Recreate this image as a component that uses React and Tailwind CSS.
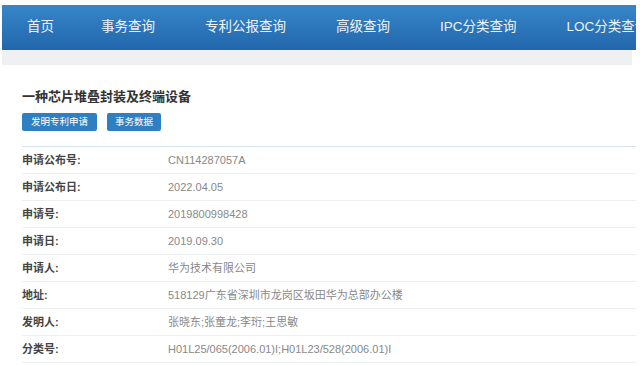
export default function App() {
  const nav = ["首页", "事务查询", "专利公报查询", "高级查询", "IPC分类查询", "LOC分类查询"];
  const rows = [
    ["申请公布号:", "CN114287057A"],
    ["申请公布日:", "2022.04.05"],
    ["申请号:", "2019800998428"],
    ["申请日:", "2019.09.30"],
    ["申请人:", "华为技术有限公司"],
    ["地址:", "518129广东省深圳市龙岗区坂田华为总部办公楼"],
    ["发明人:", "张晓东;张童龙;李珩;王思敏"],
    ["分类号:", "H01L25/065(2006.01)I;H01L23/528(2006.01)I"],
  ];
  return (
    <div
      className="w-[640px] h-[366px] overflow-hidden bg-white pt-[5px] pl-[2px] pr-[4px]"
      style={{ fontFamily: '"Liberation Sans", "Noto Sans CJK SC", sans-serif' }}
    >
      <div className="h-[45px] flex items-center overflow-hidden whitespace-nowrap bg-gradient-to-b from-[#3786c8] to-[#2266ac]">
        {nav.map((n, i) => (
          <div
            key={n}
            className={
              i === 0
                ? "pl-[25px] pr-[22px] text-[13.5px] text-[#eef3f9] shrink-0"
                : "px-[25px] text-[13.5px] text-[#eef3f9] shrink-0"
            }
          >
            {n}
          </div>
        ))}
      </div>
      <div className="h-[15px] bg-[#eef0f2] mr-[4px]" />
      <div className="pl-[20px]">
        <div className="mt-[23px] text-[13px] leading-[18px] font-bold text-[#333]">
          一种芯片堆叠封装及终端设备
        </div>
        <div className="mt-[7px] flex gap-[10px]">
          <div className="h-[18px] px-[9px] flex items-center rounded-[2px] bg-[#2f80c2] text-white text-[9.5px]">
            发明专利申请
          </div>
          <div className="h-[18px] px-[8px] flex items-center rounded-[2px] bg-[#2f80c2] text-white text-[9.5px]">
            事务数据
          </div>
        </div>
        <div className="mt-[15px] border-t border-[#d3e2ee]">
          {rows.map(([k, v]) => (
            <div key={k} className="h-[27px] flex items-center border-b border-[#eceff2] whitespace-nowrap">
              <div className="w-[146px] text-[11px] font-semibold text-[#444]">{k}</div>
              <div className="text-[11px] text-[#888]">{v}</div>
            </div>
          ))}
        </div>
      </div>
    </div>
  );
}
